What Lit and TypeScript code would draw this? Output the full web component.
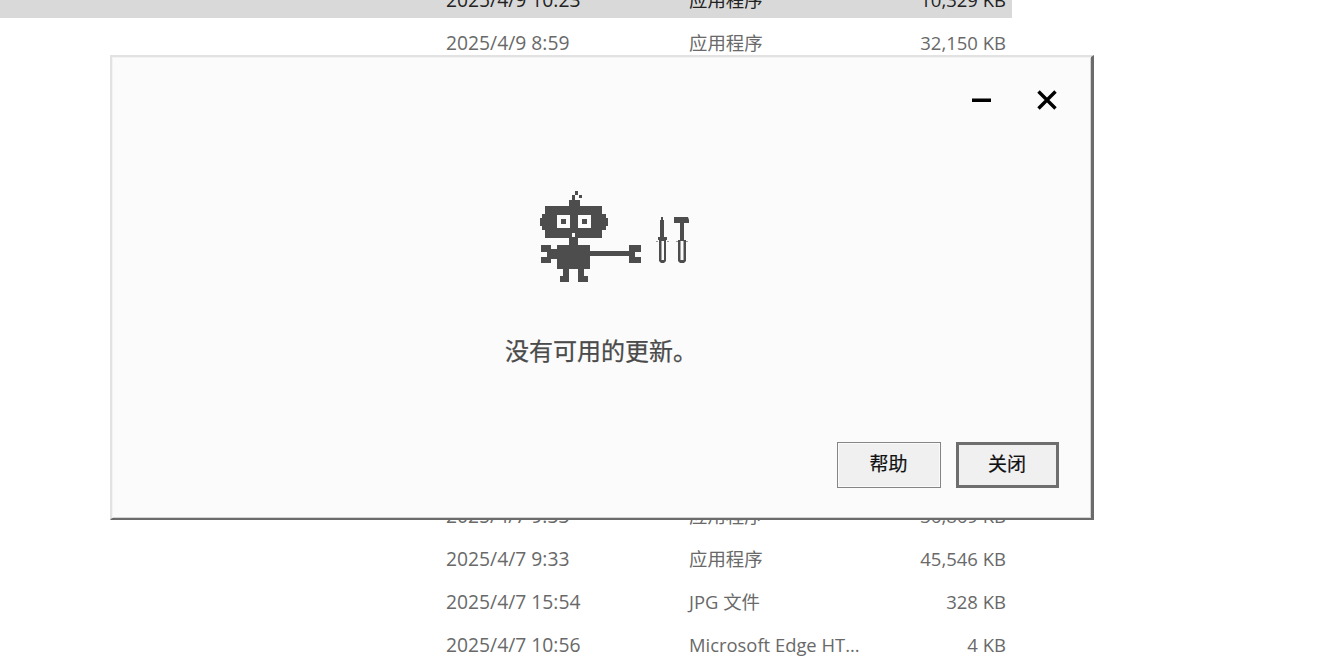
import { LitElement, html, css, svg } from "lit";
import { customElement } from "lit/decorators.js";

const rowsTop = [
  { date: "2025/4/9 10:23", type: "应用程序", size: "10,329 KB", selected: true },
  { date: "2025/4/9 8:59", type: "应用程序", size: "32,150 KB" },
];
const rowsBottom = [
  { date: "2025/4/7 9:33", type: "应用程序", size: "36,869 KB" },
  { date: "2025/4/7 9:33", type: "应用程序", size: "45,546 KB" },
  { date: "2025/4/7 15:54", type: "JPG 文件", size: "328 KB" },
  { date: "2025/4/7 10:56", type: "Microsoft Edge HT...", size: "4 KB" },
];

// rects: x, y, w, h in icon coordinates
const robot: number[][] = [
  [5, 17, 57, 32], [0, 29, 68, 8], [2, 25, 64, 16],
  [29, 11, 11, 7], [32, 6, 3, 5], [35, 2, 3, 4], [39, 6, 3, 3],
  [29, 49, 9, 7],
  [17, 56, 33, 24],
  [23, 80, 6, 7], [20, 87, 9, 6], [38, 80, 6, 7], [38, 87, 10, 6],
  [1, 56, 10, 7], [7, 63, 10, 5], [1, 68, 10, 6], [11, 60, 6, 10],
  [50, 62, 40, 5], [89, 56, 12, 7], [89, 68, 12, 6], [89, 56, 6, 18],
];

const robotIcon = svg`
  <g fill="#4d4d4d">${robot.map(([x, y, w, h]) => svg`<rect x=${x} y=${y} width=${w} height=${h}></rect>`)}</g>
  <g fill="#fbfbfb">
    <rect x="17" y="26" width="13" height="13"></rect>
    <rect x="38" y="26" width="13" height="13"></rect>
    <rect x="32" y="44" width="3" height="4"></rect>
  </g>
  <g fill="#4d4d4d">
    <rect x="21" y="30" width="5" height="5"></rect>
    <rect x="42" y="30" width="5" height="5"></rect>
  </g>
  <g fill="#4d4d4d">
    <rect x="121" y="28" width="2" height="3"></rect>
    <rect x="120" y="31" width="4" height="17"></rect>
    <rect x="118" y="48" width="9" height="3"></rect>
    <path d="M119 51h7v21l-2 2h-3l-2-2z"></path>
    <path d="M134 28h14l1 3v3h-15z"></path>
    <rect x="140" y="34" width="4" height="17"></rect>
    <path d="M138 51h8v21l-2 2h-4l-2-2z"></path>
  </g>
  <g fill="#fbfbfb">
    <rect x="121.500" y="52" width="2.500" height="19"></rect>
    <rect x="140.500" y="52" width="3" height="19"></rect>
  </g>
  <g fill="#999">
    <rect x="116" y="52" width="2" height="1"></rect>
    <rect x="127" y="52" width="2" height="1"></rect>
    <rect x="136" y="52" width="2" height="1"></rect>
    <rect x="146" y="52" width="2" height="1"></rect>
  </g>
`;

@customElement("app-root")
export class AppRoot extends LitElement {
  static styles = css`
    :host {
      display: block;
      position: relative;
      width: 1327px;
      height: 657px;
      overflow: hidden;
      background: #fff;
      font-family: "Open Sans", "Noto Sans CJK SC", sans-serif;
    }
    .list {
      display: flex;
      flex-direction: column;
      gap: 7px;
      width: 1012px;
      margin-top: -18px;
      color: #696969;
    }
    .row {
      display: grid;
      grid-template-columns: 243px 180px 137px;
      padding-left: 446px;
      padding-right: 6px;
      height: 36px;
      align-items: center;
      line-height: 36px;
      white-space: nowrap;
    }
    .row.selected {
      background: #d9d9d9;
      color: #222;
    }
    .date { font-size: 19.300px; }
    .type { font-size: 18.400px; }
    .size { font-size: 18.500px; text-align: right; }
    .hidden-rows { height: 423px; }
    .dialog {
      position: absolute;
      left: 110px;
      top: 55px;
      width: 984px;
      height: 465px;
      box-sizing: border-box;
      display: flex;
      flex-direction: column;
      background: #fbfbfb;
      border-style: solid;
      border-width: 2px 3px 2px 2px;
      border-color: #e2e2e2 #6b6b6b #6b6b6b #e2e2e2;
      box-shadow: inset 1px 1px 0 #f3f3f3, inset -1px -1px 0 #d4d4d4;
      font-family: "Noto Sans CJK SC", sans-serif;
    }
    .titlebar {
      display: flex;
      justify-content: flex-end;
      gap: 41px;
      padding: 33px 32px 0 0;
    }
    .titlebar svg { display: block; }
    .hero {
      display: block;
      margin: 79px 0 0 428px;
      filter: blur(0.3px);
    }
    .msg {
      margin: 50px 0 0 393px;
      font-size: 24px;
      line-height: 34px;
      color: #4a4a4a;
      -webkit-text-stroke: 0.25px #4a4a4a;
      white-space: nowrap;
    }
    .footer {
      margin-top: auto;
      display: flex;
      justify-content: flex-end;
      gap: 15px;
      padding: 0 32px 30px 0;
    }
    .btn {
      width: 104px;
      height: 46px;
      box-sizing: border-box;
      display: flex;
      align-items: center;
      justify-content: center;
      padding: 0 1px 5px 0;
      background: #f0f0f0;
      border: 1.500px solid #858585;
      box-shadow: inset 0 0 0 1px #fafafa;
      font-size: 19px;
      color: #111;
      -webkit-text-stroke: 0.2px #111;
    }
    .btn.default {
      width: 103px;
      border: 3px solid #6e6e6e;
      box-shadow: none;
    }
  `;

  private renderRow(r: { date: string; type: string; size: string; selected?: boolean }) {
    return html`<div class="row ${r.selected ? "selected" : ""}">
      <span class="date">${r.date}</span>
      <span class="type">${r.type}</span>
      <span class="size">${r.size}</span>
    </div>`;
  }

  render() {
    return html`
      <div class="list">
        ${rowsTop.map((r) => this.renderRow(r))}
        <div class="hidden-rows"></div>
        ${rowsBottom.map((r) => this.renderRow(r))}
      </div>
      <div class="dialog">
        <div class="titlebar">
          <svg width="24" height="20" viewBox="0 0 24 20"><rect x="2" y="8.500" width="19" height="3.500" fill="#000"></rect></svg>
          <svg width="24" height="20" viewBox="0 0 24 20"><path d="M3.500 1.500 L20.500 18.500 M20.500 1.500 L3.500 18.500" stroke="#000" stroke-width="3.400" fill="none"></path></svg>
        </div>
        <svg class="hero" width="152" height="94" viewBox="0 0 152 94">${robotIcon}</svg>
        <div class="msg">没有可用的更新。</div>
        <div class="footer">
          <div class="btn">帮助</div>
          <div class="btn default">关闭</div>
        </div>
      </div>
    `;
  }
}
